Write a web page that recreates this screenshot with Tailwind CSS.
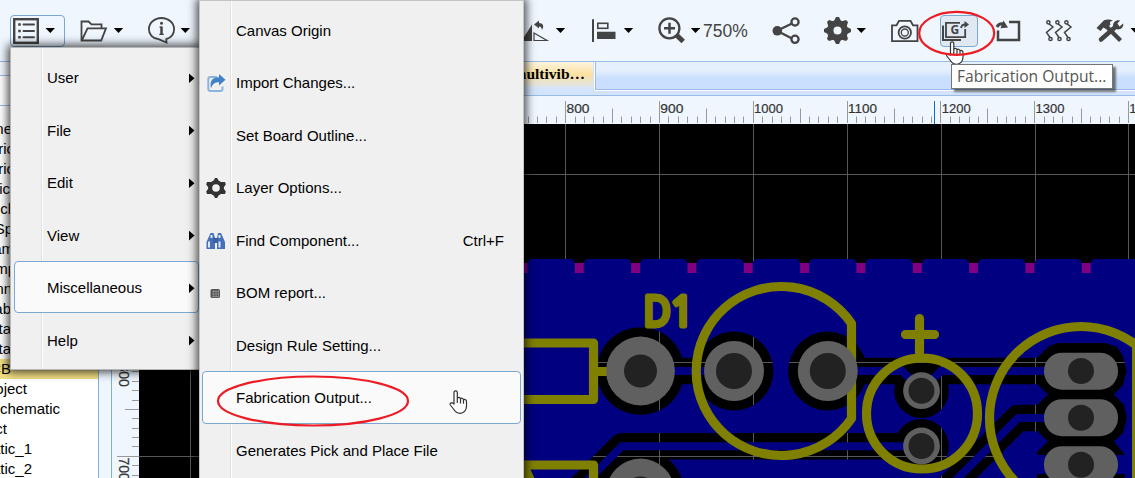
<!DOCTYPE html>
<html lang="en">
<head>
<meta charset="utf-8">
<title>PCB Editor</title>
<script src="https://cdn.jsdelivr.net/npm/@tailwindcss/browser@4"></script>
</head>
<body class="relative flex h-[478px] w-[1135px] flex-col overflow-hidden bg-[#eff6fe] font-['Liberation_Sans',Arial,sans-serif] text-[15px] text-black">

<!-- toolbar -->
<header class="flex h-[61px] shrink-0 items-start overflow-hidden pt-[15px] pl-[10px]">
  <div class="flex h-8 w-[55px] shrink-0 rounded border border-[#7ba7d3]">
    <svg class="h-8 w-[53px]" viewBox="11 16 53 32" fill="none" stroke="#444">
      <rect x="14.2" y="19.2" width="23.6" height="23.6" stroke-width="2.4"/>
      <path d="M23.5 24.5h10.5M23.5 31h10.5M23.5 37.3h10.5" stroke-width="2" stroke-linecap="round"/>
      <path d="M18.2 24.5h2.6M18.2 31h2.6M18.2 37.3h2.6" stroke-width="2.6"/>
      <path d="M45.5 28h9.500l-4.700 5z" fill="#000" stroke="none"/>
    </svg>
  </div>
  <svg class="ml-[15px] h-8 w-[44px] shrink-0" viewBox="80 15 44 32" fill="none" stroke="#444" stroke-width="1.800">
    <path d="M81.500 40.500V21.500H88.500L91.500 24.300H101.500V28.200M81.800 40.500L87.500 28.300H106L101.200 40.500z"/>
    <path d="M113.800 28h9.400l-4.700 5z" fill="#000" stroke="none"/>
  </svg>
  <svg class="ml-[24px] h-8 w-[42px] shrink-0" viewBox="148 15 42 32" fill="none" stroke="#444" stroke-width="1.800">
    <path d="M166.500 42.500L158.500 39.200C152.500 38.500 148.900 34.200 148.900 29.200C148.900 23 154.500 18 161.500 18S174.100 23 174.100 29.200C174.100 33.500 171 37.500 166.300 39.200z"/>
    <path d="M161.500 26.500v8.500" stroke-width="2.500"/><path d="M159.500 27.200h2M159.300 34.300h4.500" stroke-width="1.300"/><circle cx="161.500" cy="23.300" r="1.500" fill="#444" stroke="none"/>
    <path d="M180.600 28h9.400l-4.700 5z" fill="#000" stroke="none"/>
  </svg>
  <svg class="ml-[331px] h-8 w-[45px] shrink-0" viewBox="521 15 45 32">
    <path d="M532 24.500V41H521.500z" fill="#444"/><path d="M534 33V40.500H547z" fill="none" stroke="#444" stroke-width="1.200"/>
    <path d="M534 24.500L539 20.500V23C543 23 544.500 26 542 30C541.500 27.500 541 26.500 539 26.500V28.500z" fill="#444"/>
    <path d="M555.800 28h9.400l-4.700 5z"/>
  </svg>
  <svg class="ml-[25px] h-8 w-[43px] shrink-0" viewBox="591 15 43 32">
    <path d="M592 19.300h2V42h-2zM597 31.700h18.500V39H597z" fill="#444"/><rect x="597.800" y="23.300" width="10" height="5" fill="none" stroke="#444" stroke-width="1.600"/>
    <path d="M623.800 28h9.400l-4.700 5z"/>
  </svg>
  <svg class="ml-[23px] h-8 w-[43px] shrink-0" viewBox="657 15 43 32" fill="none" stroke="#444">
    <circle cx="669.400" cy="28.300" r="10" stroke-width="2.300"/><path d="M664 28.300h11M669.500 22.800v11" stroke-width="2.500"/>
    <path d="M676.500 35L683.200 41.500" stroke-width="5"/>
    <path d="M690.800 28h9.400l-4.700 5z" fill="#000" stroke="none"/>
  </svg>
  <span class="ml-[3px] w-[46px] shrink-0 pt-[4px] text-[17.500px] leading-6 text-[#444]">750%</span>
  <svg class="ml-[23px] h-8 w-[28px] shrink-0" viewBox="772 15 28 32" fill="none" stroke="#444" stroke-width="2.300">
    <path d="M792 23.500L777 30.800L792 38.500"/><circle cx="777.300" cy="30.800" r="4.800" fill="#444" stroke="none"/><circle cx="795" cy="22" r="3.600"/><circle cx="795" cy="39.300" r="3.600"/>
  </svg>
  <svg class="ml-[24px] h-8 w-[43px] shrink-0" viewBox="824 15 43 32">
    <circle cx="837.500" cy="30.500" r="7.300" fill="none" stroke="#444" stroke-width="6.500"/>
    <path d="M833.500 22L836 17h3l2.500 5M833.500 39l2.500 5h3l2.500-5M829 26.500L824 29v3l5 2.500M846 26.500L851 29v3l-5 2.500M834 21.500L829 20L827 22l1.500 5M841 21.500L846 20L848 22l-1.500 5M834 39.500L829 41L827 39l1.500-5M841 39.500L846 41L848 39l-1.500-5" fill="#444"/>
    <path d="M856.600 28h9.400l-4.700 5z"/>
  </svg>
  <svg class="ml-[24px] h-8 w-[28px] shrink-0" viewBox="891 15 28 32" fill="none" stroke="#444" stroke-width="1.800">
    <path d="M892 25.300H896.500L899 20.800H910.500L913 25.300H917.500V41.200H892z"/><circle cx="904.800" cy="32.500" r="6.200"/><circle cx="904.800" cy="32.500" r="3.500" stroke-width="1.300"/>
  </svg>
  <div class="ml-[21px] flex h-8 w-[38px] shrink-0 rounded border border-[#7ba7d3] bg-[#e0e9f3]">
    <svg class="h-8 w-9" viewBox="941 16 36 32" fill="none" stroke="#444">
      <path d="M960 22.800H946V37.200H965.200V29" stroke-width="1.800"/><path d="M943 25.500V40H961" stroke-width="2"/>
      <path d="M961 28C961.500 25.500 962.500 24.500 965 24.500" stroke-width="1.800"/><path d="M964.500 21l4.500 3.500l-4.500 3.500z" fill="#444" stroke="none"/>
      <text x="950.600" y="34.400" font-size="12" font-weight="bold" font-family="Open Sans" fill="#444" stroke="none">G</text>
    </svg>
  </div>
  <svg class="ml-[17px] h-8 w-[26px] shrink-0" viewBox="995 15 26 32" fill="none" stroke="#444">
    <path d="M1009 22H1019V40H998V30.500" stroke-width="2.500"/><path d="M997 27C998.500 24 1000.500 23.300 1004 24" stroke-width="3"/><path d="M1003.500 20.500l4.500 7l-7.500.8z" fill="#444" stroke="none"/>
  </svg>
  <svg class="ml-[24px] h-8 w-[28px] shrink-0" viewBox="1045 15 28 32" fill="none" stroke="#444" stroke-width="1.500">
    <path d="M1049 23.800L1053 27L1046.500 32.500L1050 37.500"/><circle cx="1048.400" cy="22.300" r="1.600"/><circle cx="1050.500" cy="39" r="1.600"/>
    <path d="M1058 23.800L1062 27L1055.500 32.500L1059 37.500"/><circle cx="1057.400" cy="22.300" r="1.600"/><circle cx="1059.500" cy="39" r="1.600"/>
    <path d="M1067 23.800L1071 27L1064.500 32.500L1068 37.500"/><circle cx="1066.400" cy="22.300" r="1.600"/><circle cx="1068.500" cy="39" r="1.600"/>
  </svg>
  <svg class="ml-[23px] h-8 w-[43px] shrink-0" viewBox="1096 15 43 32" fill="none" stroke="#444">
    <path d="M1101 39.500L1116.500 26" stroke-width="4.500" stroke-linecap="round"/>
    <path d="M1107 27L1120.500 40.500" stroke-width="4.200"/>
    <path d="M1096.500 28L1104 20.300C1107 19 1110.500 19.300 1113 20.800C1110 21 1109.500 22.500 1110.500 24.500L1106 29L1103.500 27.500L1100.500 31z" fill="#444" stroke="none"/>
    <path d="M1120 20.500L1117 24L1119.500 26.500L1123.200 23.500C1124 27.500 1120 30.500 1116 29L1113 25.500C1113 22 1116.500 19.500 1120 20.500z" fill="#444" stroke="none"/>
    <path d="M1130.500 28h9.400l-4.700 5z" fill="#000" stroke="none"/>
  </svg>
</header>

<main class="flex min-h-0 flex-1 border-t border-[#99bbe8]">
  <!-- project tree -->
  <aside class="flex w-[99px] shrink-0 flex-col border-r border-[#83aedb] bg-white">
    <div class="h-[14px] shrink-0 border-b border-[#99bbe8] bg-[#f4f8fd]"></div>
    <div class="h-[30px] shrink-0 border-b border-[#99bbe8]"></div>
    <div class="mt-[13px] flex flex-col leading-5 whitespace-nowrap">
      <div class="flex h-5 w-[12px] justify-end">ne</div>
      <div class="flex h-5 w-[14px] justify-end">ric</div>
      <div class="flex h-5 w-[14px] justify-end">ric</div>
      <div class="flex h-5 w-[10px] justify-end">ric</div>
      <div class="flex h-5 w-[16px] justify-end">ch</div>
      <div class="flex h-5 w-[13px] justify-end">Sp</div>
      <div class="flex h-5 w-[14px] justify-end">am</div>
      <div class="flex h-5 w-[16px] justify-end">mp</div>
      <div class="flex h-5 w-[12px] justify-end">mn</div>
      <div class="flex h-5 w-[11px] justify-end">ab</div>
      <div class="flex h-5 w-[11px] justify-end">ta</div>
      <div class="flex h-5 w-[11px] justify-end">ta</div>
      <div class="bg-[#f2df84]"><div class="flex h-5 w-[11px] justify-end">CB</div></div>
      <div class="flex h-5 w-[27px] justify-end">Project</div>
      <div class="flex h-5 w-[60px] justify-end">Schematic</div>
      <div class="flex h-5 w-[7px] justify-end">ject</div>
      <div class="flex h-5 w-[32px] justify-end">matic_1</div>
      <div class="flex h-5 w-[32px] justify-end">matic_2</div>
    </div>
  </aside>
  <section class="ml-[12px] flex min-w-0 flex-1 flex-col border-l border-[#83aedb]">
    <!-- document tabs -->
    <div class="flex h-[34px] shrink-0 border-b border-[#99bbe8] bg-[#d3e4fa]">
      <div class="h-[25px] w-[481px] bg-linear-to-b from-[#fdf3dd] via-[#fce0a0] to-[#dfe4ea] pr-[8px] text-right font-['Liberation_Serif',serif] text-[15.500px] leading-[24px] font-bold">multivib…</div>
      <div class="ml-[2px] h-[28px] flex-1 border-b border-l border-[#99bbe8] bg-linear-to-b from-[#e6f0fd] from-30% to-[#c9dffd] to-60% shadow-[0_1px_0_#fff,-1px_0_0_#fff]"></div>
    </div>
    <svg class="h-[28px] w-[1023px] shrink-0" viewBox="112 96 1023 28">
      <path id="rulerX" stroke="#999"/>
      <g id="labelsX" font-size="13.500" fill="#333" stroke="#333" stroke-width=".2"></g>
      <path d="M934.500 101v23" stroke="#0a6cd0"/>
    </svg>
    <div class="flex min-h-0 flex-1">
      <svg class="h-[354px] w-[27px] shrink-0" viewBox="112 124 27 354">
        <path id="rulerY" stroke="#999"/>
        <text transform="translate(118.500 363.500) rotate(90)" font-size="14" fill="#333" stroke="#333" stroke-width=".2">800</text>
        <text transform="translate(118.500 457.500) rotate(90)" font-size="14" fill="#333" stroke="#333" stroke-width=".2">700</text>
      </svg>
      <!-- board -->
      <svg class="h-[354px] w-[996px] shrink-0 bg-black" viewBox="139 124 996 354" fill="none">
        <mask id="pour" maskUnits="userSpaceOnUse" x="139" y="124" width="996" height="354">
          <rect x="139" y="124" width="996" height="354" fill="#fff"/>
          <g stroke="#000" stroke-width="26.400" stroke-linejoin="round">
            <path d="M640 371H734M828 371H1050M927 446.200H622L580 488M1060 418H1018L946 490"/>
          </g>
          <g fill="#000">
            <circle cx="640.500" cy="371" r="43.800"/><circle cx="640.500" cy="493" r="43.800"/>
            <circle cx="734" cy="371" r="39.400"/><circle cx="827.500" cy="371" r="39.400"/>
            <circle cx="921.500" cy="390.700" r="27.300"/><circle cx="921.500" cy="446.200" r="27.300"/>
            <path d="M1037 358L1049 346L1058 343H1105L1117 347L1123 356L1126.500 371L1123 385L1114 394.500L1124 405L1127 418L1123 433L1114 441.500L1125 455V478H1037V452L1048 441.500L1037 431V405L1048 394.500L1037 384z"/>
          </g>
        </mask>
        <path stroke="#666" d="M190.500 124V478M565.500 124V478M659.500 124V478M753.500 124V478M847.500 124V478M941.500 124V478M1035.500 124V478M1128.500 124V478M139 174.500H1135M139 268.500H1135M139 362.500H1135M139 456.500H1135" stroke-opacity=".85"/>
        <g fill="#000080" mask="url(#pour)">
          <g id="bumps"></g>
          <rect x="480" y="273" width="655" height="205"/>
        </g>
        <g stroke="#000080" stroke-width="8">
          <path d="M640 371H734M828 371H902L921.500 390.500L941 371H1060M921 446.200H622L580 488M1060 418H1018L946 490"/>
          <path d="M1037 464.500H1125" stroke-width="19"/>
        </g>
        <g stroke="#808000" stroke-width="9.200" stroke-linejoin="round">
          <path d="M510 343H593.500V399.500H510M593.500 371.500H612M510 465H593.500V490M522 462L532 484"/>
          <path d="M851.500 323.500A85 84.500 0 1 0 851.500 418.500z"/>
          <circle cx="922" cy="413.500" r="55.500"/>
          <path d="M919.500 318.500V352M905.500 334.500H934.500" stroke-linecap="round"/>
          <circle cx="1081" cy="418" r="91.500"/>
        </g>
        <rect x="1132" y="340" width="3" height="138" fill="#808000"/>
        <g font-size="41" fill="#808000" stroke="#808000" stroke-width="5" stroke-linejoin="round" font-family="Noto Sans">
          <text x="643.500" y="326" textLength="27" lengthAdjust="spacingAndGlyphs">D</text><text x="671" y="326" textLength="22" lengthAdjust="spacingAndGlyphs">1</text>
        </g>
        <g fill="#606060">
          <circle cx="640.500" cy="371" r="34.400"/><circle cx="640.500" cy="493" r="34.400"/>
          <circle cx="734" cy="371" r="30"/><circle cx="827.800" cy="371" r="30"/>
          <circle cx="921.500" cy="390.700" r="18.400"/><circle cx="921.500" cy="446" r="18.400"/>
          <rect x="1044" y="352.700" width="74" height="37" rx="18"/><rect x="1044" y="399.200" width="74" height="37" rx="18"/><rect x="1044" y="446.200" width="74" height="37" rx="18"/>
        </g>
        <g fill="#222">
          <circle cx="640.500" cy="371" r="16.500"/><circle cx="640.500" cy="493" r="16.500"/>
          <circle cx="734" cy="371" r="18"/><circle cx="827.800" cy="371" r="18"/>
          <circle cx="921.500" cy="390.700" r="13"/><circle cx="921.500" cy="446" r="13"/>
          <circle cx="1081" cy="371" r="13"/><circle cx="1081" cy="417.700" r="13"/><circle cx="1081" cy="464.700" r="13"/>
        </g>
      </svg>
    </div>
  </section>
</main>

<!-- main menu -->
<nav class="absolute top-[47px] left-[10px] flex h-[323px] w-[190px] flex-col border border-[#b5b5b5] bg-[#f0f0f0] pt-[3.500px] shadow-[0_0_9px_2px_rgba(0,0,0,0.75)]">
  <div class="absolute inset-y-0 left-[30px] w-[2px] border-l border-[#e2e2e2] bg-white"></div>
  <div class="relative flex h-[52.500px] items-center pl-[36px]">User</div>
  <div class="relative flex h-[52.500px] items-center pt-px pl-[36px]">File</div>
  <div class="relative flex h-[52.500px] items-center pl-[36px]">Edit</div>
  <div class="relative flex h-[52.500px] items-center pt-px pl-[36px]">View</div>
  <div class="relative -mt-[1px] mb-[1px] ml-[3px] flex h-[52.500px] items-center rounded border border-[#7ba7d3] bg-[#fafafa] pt-[2px] pl-[32px]">Miscellaneous</div>
  <div class="relative flex h-[52.500px] items-center pt-px pl-[36px]">Help</div>
  <svg class="absolute top-0 right-[4px] h-[321px] w-[6px]" viewBox="189 48 6 321"><path d="M189 73.500l5.500 4.800l-5.500 4.800zM189 125.800l5.500 4.800l-5.500 4.800zM189 178.500l5.500 4.800l-5.500 4.800zM189 230.800l5.500 4.800l-5.500 4.800zM189 283.500l5.500 4.800l-5.500 4.800zM189 335.800l5.500 4.800l-5.500 4.800z"/></svg>
</nav>

<!-- submenu -->
<nav class="absolute top-0 left-[199px] flex h-[490px] w-[325px] flex-col border-x border-t border-[#c4c4c4] bg-[#f0f0f0] pt-[3.500px] shadow-[0_0_9px_2px_rgba(0,0,0,0.75)]">
  <div class="absolute inset-y-0 left-[30px] w-[2px] border-l border-[#e2e2e2] bg-white"></div>
  <div class="relative flex h-[52.500px] items-center pl-[36px]">Canvas Origin</div>
  <div class="relative flex h-[52.500px] items-center pl-[6px]">
    <svg class="mr-[10px] h-5 w-5" viewBox="206 73 20 20" fill="none"><path d="M217 77H210.500Q208.300 77 208.300 79V88.500Q208.300 91 210.500 91H220.500Q222.500 91 222.500 89V86.500" stroke="#8ab4e0" stroke-width="2"/><path d="M211 88.500C209.500 80.500 212.500 77.300 219 77.300V74L225.500 79.700L219 85.500V82.300C214.500 82.300 212.500 84 211 88.500z" fill="#4381c6"/></svg>Import Changes...</div>
  <div class="relative flex h-[52.500px] items-center pl-[36px]">Set Board Outline...</div>
  <div class="relative flex h-[52.500px] items-center pl-[6px]">
    <svg class="mr-[10px] h-5 w-5" viewBox="206 178 20 20"><circle cx="216" cy="188" r="5.800" fill="none" stroke="#333" stroke-width="4"/><path d="M213 182L215 178h2.200l2 4M213 194l2 4h2.200l2-4M211.500 182L207 182l-.8 2.500l2.500 3.500l-2.500 3.500l.8 2.500l4.500 0M220.500 182L225 182l.8 2.500l-2.500 3.500l2.500 3.500l-.8 2.500l-4.500 0" fill="#333"/></svg>Layer Options...</div>
  <div class="relative flex h-[52.500px] items-center pl-[6px]">
    <svg class="mr-[10px] h-5 w-5" viewBox="206 231 20 20"><path d="M210.500 233h3l1.500 5V249H206.500V242zM218 233h3l4 9V249h-8V238z" fill="#4670b8"/><path d="M213 238h5v5h-5z" fill="#3a5fa5"/><path d="M209 241.500v6M219.500 241.500v6M211.500 235v3M219.500 235v3" stroke="#dce8f8" stroke-width="2"/></svg>Find Component...<span class="ml-auto pr-[19px]">Ctrl+F</span></div>
  <div class="relative flex h-[52.500px] items-center pl-[6px]">
    <svg class="mr-[10px] h-5 w-5" viewBox="206 283 20 20"><rect x="210.500" y="289" width="9.500" height="9" rx="1.500" fill="#555"/><path d="M212 291.500h7M212 294h7M212 296.500h7M213.500 290v7.500M216 290v7.500M218.500 290v7.500" stroke="#aaa" stroke-width=".5"/></svg>BOM report...</div>
  <div class="relative flex h-[52.500px] items-center pl-[36px]">Design Rule Setting...</div>
  <div class="relative mx-[2px] -mt-[1px] mb-[0.5px] flex h-[53px] items-center rounded border border-[#7ba7d3] bg-[#fafafa] pt-px pl-[33px]">Fabrication Output...</div>
  <div class="relative flex h-[52.500px] items-center pl-[36px]">Generates Pick and Place File</div>
</nav>

<!-- markers, pointers and tooltip -->
<svg class="absolute inset-0 h-[478px] w-[1135px]" viewBox="0 0 1135 478" fill="none">
  <g id="hand" transform="translate(449.500 390)"><path d="M4.500 14V2.500C4.500 .2 7.800 .2 7.800 2.500V8.500C8.300 6.800 10.800 7 11 9C11.700 7.600 13.800 8 14 10C14.800 9 17 9.500 17 11.500V16C17 20 14.500 23.300 10.500 23.300C7 23.300 5.500 21.500 4 19L.8 15C-.2 13 2.500 11.800 4.500 14zM7.800 8.500V13M11 9V13.500M14 10V13.800" fill="#fff" stroke="#333" stroke-width="1.200" stroke-linejoin="round"/></g>
  <ellipse cx="313" cy="401" rx="95" ry="24.500" stroke="#ed1c24" stroke-width="2.200"/>
  <use href="#hand" x="496.500" y="-349"/>
  <ellipse cx="956.700" cy="33.300" rx="37.500" ry="21.500" stroke="#ed1c24" stroke-width="2.200"/>
</svg>
<div class="absolute top-[64px] left-[951px] flex h-[25px] w-[162px] items-center border border-[#767676] bg-white pl-[5px] font-['Open_Sans',sans-serif] text-[15.600px] whitespace-nowrap text-[#555] shadow-[3px_3px_2px_rgba(0,0,0,0.5)]">Fabrication Output...</div>

<script>
  // Ruler ticks: one label every 93.8px, ten divisions each.
  const step = 9.38;
  let dx = '', dy = '';
  for (let i = -40; i < 62; i++) {
    const x = Math.floor(565.7 + i * step) + .5;
    if (x > 139) dx += `M${x} ${i % 10 === 0 ? 101 : i % 5 === 0 ? 108.5 : 116.500}V123`;
  }
  for (let i = -34; i < 3; i++) {
    const y = Math.floor(456.300 + i * step) + .5;
    dy += `M${i % 10 === 0 ? 117 : i % 5 === 0 ? 125 : 132} ${y}H139`;
  }
  rulerX.setAttribute('d', dx);
  rulerY.setAttribute('d', dy);
  labelsX.innerHTML = [800, 900, 1000, 1100, 1200, 1300, 1400]
    .map((n, i) => `<text x="${566.500 + i * 93.8}" y="112.500" textLength="${n < 1000 ? 23 : 29}" lengthAdjust="spacingAndGlyphs">${n}</text>`).join('');
  // Board edge: rounded pour segments separated by purple outline marks.
  let b = '';
  for (let i = 0; i < 12; i++) {
    const c = 523 + i * 56.33;
    if (i < 11) b += `<rect x="${c - 5.7}" y="263" width="11.500" height="10" fill="#800080"/>`;
    b += `<rect x="${c - 52}" y="259" width="47.500" height="22" rx="5"/>`;
  }
  bumps.innerHTML = b;
</script>
</body>
</html>
